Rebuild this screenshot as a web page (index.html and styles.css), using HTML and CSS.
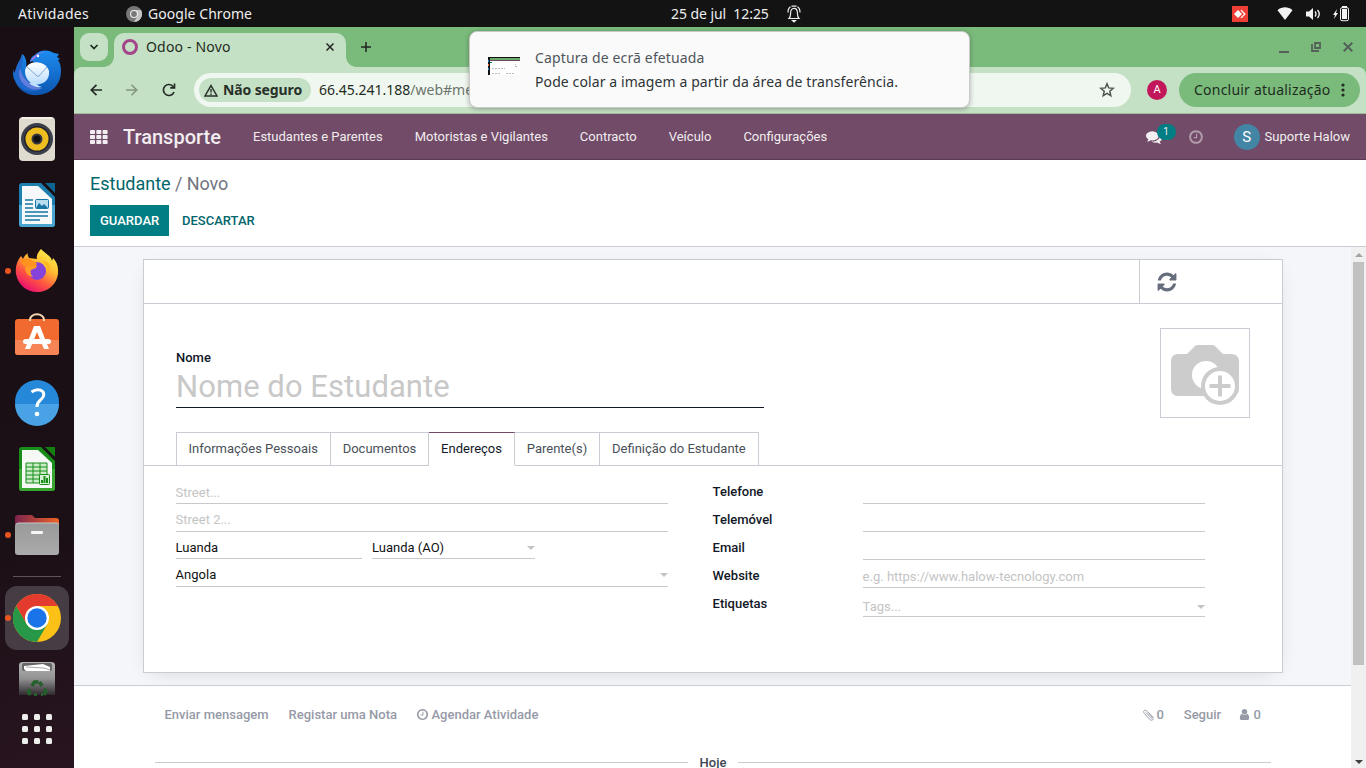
FILE: index.html
```html
<!DOCTYPE html>
<html lang="pt">
<head>
<meta charset="utf-8">
<title>Odoo - Novo</title>
<link rel="stylesheet" href="styles.css">
</head>
<body>
<header class="topbar">
  <span class="activities">Atividades</span>
  <span class="app-name"><svg width="16" height="16" viewBox="0 0 16 16"><circle cx="8" cy="8" r="8" fill="#777"/><path d="M8 4h7A8 8 0 0 1 8 16l3.500-6z" fill="#c4c4c4"/><circle cx="8" cy="8" r="4" fill="#eee"/><circle cx="8" cy="8" r="2.900" fill="#777"/></svg><span class="app-text">Google Chrome</span></span>
  <span class="clock"><span class="clock-text">25 de jul&nbsp; 12:25</span><svg width="14" height="18" viewBox="0 0 14 18" fill="none" stroke="#eee" stroke-width="1.200"><path d="M2 13.500c1.500-1.500 1.600-3 1.600-5.500C3.600 5.300 5 3.400 7 3.400s3.400 1.900 3.400 4.600c0 2.500.1 4 1.600 5.500zM1 7.500c0-3 .8-4.700 2.600-5.700M13 7.500c0-3-.8-4.700-2.600-5.700M4.500 1.200h5"/><path d="M5.500 15.500h3L7 17z" fill="#eee"/></svg></span>
  <span class="tray">
    <svg width="16" height="16" viewBox="0 0 16 16"><path fill="#ef3e36" d="M0 0h16v16H0z"/><path fill="#fff" d="m6 4 4 4-4 4-4-4z"/><path d="m8.500 4.500 1-.8L13.800 8l-4.300 4.300-1-.8L12 8z" fill="#fff"/></svg>
    <svg class="wifi" width="16" height="14" viewBox="0 0 16 14"><path fill="#f2f2f2" d="M.5 3.200C5-.6 11-.6 15.500 3.200L8 13z"/></svg>
    <svg class="volume" width="15" height="14" viewBox="0 0 15 14"><path fill="#f2f2f2" d="M0 4.500h3L7 1v12L3 9.500H0z"/><path d="M9 4.500q2 2.500 0 5M11.500 3q3.500 4 0 8" fill="none" stroke="#f2f2f2" stroke-width="1.300"/></svg>
    <svg class="battery" width="16" height="16" viewBox="0 0 16 16"><path fill="#f2f2f2" d="M4 3 0 9h2L1 13l4-6H3zM9 3h5v10H9zM9 0h5v2H9z"/><rect x="7.500" y="1.700" width="8" height="13" rx="1.500" fill="none" stroke="#f2f2f2"/></svg>
  </span>
</header>
<div class="desktop">
<nav class="dock">
  <div class="slot"><svg width="48" height="48" viewBox="0 0 48 48"><defs><linearGradient id="tb" x2="0" y2="1"><stop stop-color="#1d8cf0"/><stop offset="1" stop-color="#0c55b0"/></linearGradient><linearGradient id="env" x2="0" y2="1"><stop stop-color="#fff"/><stop offset="1" stop-color="#b9dcff"/></linearGradient></defs><path fill="url(#tb)" d="M0 20c0 6 0 8 2 12C6 42 15 47 25 46c14-1 23-11 23-24 0-5-1-8-3-11l2-1-3-2 2-3-5-1C34 0 26 1 22 6c-3 1-5 4-5 7 3-2 4 0 4 2l-9 9C15 15 13 7 9 5 8 11 5 12 3 20c-1 2-1 3-2 4z"/><path d="M17 13c3-6 8-10 15-10-6 1-8 4-11 7z" fill="#ad78e8"/><path d="M3 33C-1 21 7 12 10 6c1 12-6 14 2 28 3 6 11 8 16 6-10 5-20 1-25-7" fill="#2068cc"/><path d="M7 19c-3 8 1 16 9 20 5 2 10 2 13 0-9-1-20-8-22-20z" fill="#607ddd"/><path fill="url(#env)" d="M12 22c1-11 20-12 24 0 1 10-7 15-17 13-4-3-7-7-7-13z"/><path d="m14 18 10 9q1 1 2 0l8-9" fill="none" stroke="#82aacd"/><path d="M22 34q3 3 7 4-8 1-13-4z" fill="#c3e2ff"/><circle cx="25" cy="7" r="1.200" fill="#fff"/></svg></div>
  <div class="slot"><svg width="48" height="48" viewBox="0 0 48 48"><rect x="6" y="2" width="36" height="44" rx="4" fill="#dfdbcf"/><path d="M9 3h30" stroke="#f4f1e8" stroke-width="2"/><circle cx="24" cy="24" r="16" fill="#3b3f4c"/><circle cx="24" cy="24" r="13" fill="#22242c"/><circle cx="24" cy="24" r="11.500" fill="#eebd20"/><circle cx="24" cy="24" r="5.500" fill="#34373e"/><circle cx="24" cy="24" r="3.500" fill="#111"/></svg></div>
  <div class="slot"><svg width="48" height="48" viewBox="0 0 48 48"><path d="M9 2h19l14 14v27a3 3 0 0 1-3 3H9a3 3 0 0 1-3-3V5a3 3 0 0 1 3-3z" fill="#1d7fae"/><path d="M6 24h36v19a3 3 0 0 1-3 3H9a3 3 0 0 1-3-3z" fill="#4aa6cf"/><path d="M9 5h16l14 13v25H9z" fill="#f6f8fa"/><path d="M32 2h10v10z" fill="#0c6590"/><path d="M12 19h8M12 23h8M12 27h8M12 31h23M12 35h23M12 39h15" stroke="#1675a4" stroke-width="1.700"/><rect x="22.500" y="18.500" width="13" height="9" rx="1" fill="#b8ddee" stroke="#1675a4"/><path d="m23 27 3-5 3 3 2-2 4 4z" fill="#1675a4"/></svg></div>
  <div class="slot"><i class="running"></i><svg width="48" height="48" viewBox="0 0 48 48"><defs><linearGradient id="ff" x1=".85" y1=".05" x2=".25" y2="1"><stop stop-color="#fff44f"/><stop offset=".35" stop-color="#ffbd32"/><stop offset=".65" stop-color="#ff5840"/><stop offset="1" stop-color="#e90675"/></linearGradient></defs><path fill="url(#ff)" d="M28 2c-3 3-5 7-4 10l-8-1c-1-2-2-3-1-5-3 2-4 4-5 6L8 9C4 14 2 20 3 27c2 11 11 18 21 18 12 0 22-10 21-22 0-5-2-9-5-12l-1 3C38 8 32 7 28 2z"/><circle cx="24" cy="24" r="9" fill="#8643dc"/><path d="M13 18q4-1 11 0l-1 3-5 2c-1 3 0 5 2 7-7-1-9-7-7-12z" fill="#ff9b28"/><path d="M29 14q7 4 5 13 5-5 2-10-2-3-7-3" fill="#ffb51e"/><path d="M8 13c3-2 8-2 12 1l4 2-2 3-8 1q-6-2-6-7" fill="#ff931e"/></svg></div>
  <div class="slot"><svg width="48" height="48" viewBox="0 0 48 48"><rect x="2" y="6" width="44" height="36" rx="3" fill="#f16b31"/><path d="M2 27h44v12a3 3 0 0 1-3 3H5a3 3 0 0 1-3-3z" fill="#f68455"/><path d="M17 8c-1-9 15-9 14 0" fill="none" stroke="#f3d5ae" stroke-width="2"/><path d="M12 36 21 13h6l9 23h-5l-7-17-7 17z" fill="#fff"/><rect x="10" y="26" width="28" height="5" rx="2.500" fill="#fff"/></svg></div>
  <div class="slot"><svg width="48" height="48" viewBox="0 0 48 48"><circle cx="24" cy="23" r="22" fill="#2588d8"/><path d="M2 25h44a22 22 0 0 1-44 0z" fill="#48a2e5"/><path d="M18.500 13c6-4.500 13.500-2 12 4-1 4-7 5-6.500 11" fill="none" stroke="#fff" stroke-width="3"/><circle cx="24" cy="35" r="2.300" fill="#fff"/></svg></div>
  <div class="slot"><svg width="48" height="48" viewBox="0 0 48 48"><path d="M9 2h19l14 14v27a3 3 0 0 1-3 3H9a3 3 0 0 1-3-3V5a3 3 0 0 1 3-3z" fill="#198d1a"/><path d="M6 24h36v19a3 3 0 0 1-3 3H9a3 3 0 0 1-3-3z" fill="#38a52e"/><path d="M9 5h16l14 13v25H9z" fill="#f6f8f6"/><path d="M32 2h10v10z" fill="#137f13"/><path d="M13 18h21v20H13z" fill="#caedc8"/><path d="M13 18h21v20H13zM13 22h21M13 26h21M13 30h21M13 34h21M20 18v20M27 18v20" stroke="#178d18" fill="none"/><rect x="26.500" y="29.500" width="10" height="10" rx="1" fill="#d9f3d6" stroke="#178d18"/><path d="M28 35h2v3h-2zM30.500 31h2v7h-2zM33 33h2v5h-2z" fill="#178d18"/></svg></div>
  <div class="slot"><i class="running"></i><svg width="48" height="48" viewBox="0 0 48 48"><defs><linearGradient id="fold"><stop stop-color="#7c234e"/><stop offset="1" stop-color="#ee6427"/></linearGradient><linearGradient id="gray" x2="0" y2="1"><stop stop-color="#999"/><stop offset="1" stop-color="#ababab"/></linearGradient></defs><path d="M5 4h14l3 3h21a3 3 0 0 1 3 3v10H2V7a3 3 0 0 1 3-3z" fill="url(#fold)"/><rect x="2" y="12" width="44" height="32" rx="3" fill="url(#gray)"/><path d="M3 13.500q1-1.500 3-1.500h37q2 0 3 1.500" fill="none" stroke="#c6c6c6"/><rect x="18" y="20" width="12" height="3" rx="1" fill="#f5f5f5"/></svg></div>
  <div class="dock-line"></div>
  <div class="slot active"><i class="running"></i><svg width="48" height="48" viewBox="0 0 48 48"><circle cx="24" cy="24" r="24" fill="#fbc116"/><path d="M3.200 12A24 24 0 0 1 44.800 12H24L13.600 30z" fill="#e33b2e"/><path d="M3.200 12A24 24 0 0 0 24 48l10.400-18H13.600z" fill="#279847"/><circle cx="24" cy="24" r="12" fill="#fff"/><circle cx="24" cy="24" r="9.700" fill="#1a73e8"/></svg></div>
  <svg class="trash" width="38" height="35" viewBox="0 0 38 35"><defs><linearGradient id="tr" x2="0" y2="1"><stop stop-color="#b4b4b4"/><stop offset=".5" stop-color="#929292"/><stop offset="1" stop-color="#302a30"/></linearGradient></defs><path d="M1 34V4q0-3 4-3h28q4 0 4 3v30z" fill="url(#tr)"/><rect x="4" y="2" width="30" height="8" rx="2" fill="#666"/><path d="M6 8V5l19-2 7 3v4H8z" fill="#fff"/><path d="m8 6 18 1 6 2" stroke="#aaa" fill="none"/><path d="m14 25 2.500-4h4M21.500 21l2.500 4M26.500 27.500l1.500 3-2 3.500M12 28l-1.500 3 2 3M16 34h3M23 34h2" fill="none" stroke="#245f2c" stroke-width="3.500"/></svg>
  <div class="app-grid"><i></i><i></i><i></i><i></i><i></i><i></i><i></i><i></i><i></i></div>
</nav>
<main class="browser">
  <div class="tabstrip">
    <span class="tab-search"><svg width="10" height="6" viewBox="0 0 10 6"><path d="m1.500 1 3.500 3.500L8.500 1" fill="none" stroke="#1e2b20" stroke-width="1.700"/></svg></span>
    <div class="tab"><i class="odoo"></i><span class="tab-title">Odoo - Novo</span><svg width="8" height="8" viewBox="0 0 8 8"><path d="m.5.5 7 7m0-7-7 7" stroke="#222" stroke-width="1.500"/></svg></div>
    <svg class="new-tab" width="10" height="10" viewBox="0 0 10 10"><path d="M0 5h10M5 0v10" stroke="#222" stroke-width="1.500"/></svg>
    <div class="window-controls">
      <svg width="10" height="12" viewBox="0 0 10 12"><path d="M0 10h10" stroke="#55605a" stroke-width="2"/></svg>
      <svg width="10" height="10" viewBox="0 0 10 10"><path d="M4 1h5v5H4zM1 2v7h7" fill="none" stroke="#55605a" stroke-width="1.800"/></svg>
      <svg width="10" height="10" viewBox="0 0 10 10"><path d="m.7.7 8.600 8.600m0-8.600L.7 9.300" stroke="#55605a" stroke-width="2"/></svg>
    </div>
  </div>
  <div class="toolbar">
    <svg class="back" width="12" height="12" viewBox="0 0 12 12"><path d="M12 6H1.500M6.500.8 1.300 6l5.200 5.200" fill="none" stroke="#222a24" stroke-width="1.700"/></svg>
    <svg class="forward" width="12" height="12" viewBox="0 0 12 12"><path d="M0 6h10.500M5.500.8 10.700 6l-5.200 5.200" fill="none" stroke="#84977f" stroke-width="1.600"/></svg>
    <svg class="reload" width="14" height="14" viewBox="0 0 14 14"><path d="M12 9a5.500 5.500 0 1 1-.7-5.300M12.500.5v4.300H8.200" fill="none" stroke="#222a24" stroke-width="1.700"/></svg>
    <div class="address">
      <span class="security"><svg width="14" height="13" viewBox="0 0 14 13"><path d="M7 1.600 13 12H1z" fill="none" stroke="#28302a" stroke-width="1.500"/><path d="M7 5v3.500M7 9.500V11" stroke="#28302a" stroke-width="1.400"/></svg><b>Não seguro</b></span>
      <span class="url">66.45.241.188<span>/web#me</span></span>
      <svg class="star" width="16" height="16" viewBox="0 0 16 16"><path d="m8 1.800 1.700 4.100 4.500.4-3.400 2.900 1 4.400L8 11.300l-3.800 2.300 1-4.400-3.400-2.900 4.500-.4z" fill="none" stroke="#4d5750" stroke-width="1.500"/></svg>
    </div>
    <span class="profile">A</span>
    <div class="update"><span class="update-text">Concluir atualização</span><svg width="4" height="14" viewBox="0 0 4 14" fill="#222a24"><circle cx="2" cy="2" r="1.600"/><circle cx="2" cy="7" r="1.600"/><circle cx="2" cy="12" r="1.600"/></svg></div>
  </div>
  <nav class="odoo-nav">
    <svg class="apps" width="18" height="14" viewBox="0 0 18 14" fill="#f1edf0"><rect width="5" height="4" rx=".8"/><rect x="6.300" width="5" height="4" rx=".8"/><rect x="12.600" width="5" height="4" rx=".8"/><rect y="5" width="5" height="4" rx=".8"/><rect x="6.300" y="5" width="5" height="4" rx=".8"/><rect x="12.600" y="5" width="5" height="4" rx=".8"/><rect y="10" width="5" height="4" rx=".8"/><rect x="6.300" y="10" width="5" height="4" rx=".8"/><rect x="12.600" y="10" width="5" height="4" rx=".8"/></svg>
    <span class="brand">Transporte</span>
    <div class="menu"><span>Estudantes e Parentes</span><span>Motoristas e Vigilantes</span><span>Contracto</span><span>Veículo</span><span>Configurações</span></div>
    <div class="systray">
      <span class="chat"><svg width="16" height="16" viewBox="0 0 1792 1792"><path fill="#f2eef1" d="M1408 768q0 139-94 257t-256.500 186.500-353.500 68.500q-86 0-176-16-124 88-278 128-36 9-86 16h-3q-11 0-20.500-8t-11.500-21q-1-3-1-6.500t.5-6.500 2-6l2.500-5 3.500-5.500 4-5 4.500-5 4-4.500q5-6 23-25t26-29.500 22.500-29 25-38.500 20.500-44q-124-72-195-177t-71-224q0-139 94-257t256.500-186.500 353.500-68.500 353.500 68.500 256.500 186.500 94 257zm384 256q0 120-71 224.500t-195 176.500q10 24 20.500 44t25 38.500 22.500 29 26 29.500 23 25q1 1 4 4.500t4.500 5 4 5 3.500 5.500l2.500 5 2 6 .5 6.500-1 6.500q-3 14-13 22t-22 7q-50-7-86-16-154-40-278-128-90 16-176 16-271 0-472-132 58 4 88 4 161 0 309-45t264-129q125-92 192-212t67-254q0-77-23-152 129 71 204 178t75 230z"/></svg><b class="badge">1</b></span>
      <svg class="activity" width="16" height="16" viewBox="0 0 1792 1792"><path fill="#b19cab" d="M1024 544v448q0 14-9 23t-23 9h-320q-14 0-23-9t-9-23v-64q0-14 9-23t23-9h224v-352q0-14 9-23t23-9h64q14 0 23 9t9 23zm416 352q0-148-73-273t-198-198-273-73-273 73-198 198-73 273 73 273 198 198 273 73 273-73 198-198 73-273zm224 0q0 209-103 385.500t-279.500 279.500-385.500 103-385.500-103-279.500-279.500-103-385.500 103-385.500 279.500-279.500 385.500-103 385.500 103 279.500 279.500 103 385.500z"/></svg>
      <span class="avatar">S</span><span class="user">Suporte Halow</span>
    </div>
  </nav>
  <section class="control-panel">
    <div class="breadcrumb"><a>Estudante</a> / Novo</div>
    <div class="buttons"><button class="save">GUARDAR</button><button class="discard">DESCARTAR</button></div>
  </section>
  <div class="page">
    <div class="content">
      <div class="form-bg">
        <section class="sheet">
          <div class="button-box"><div class="stat"><svg width="22" height="22" viewBox="0 0 1792 1792"><path fill="#666e7d" d="M1639 1056q0 5-1 7-64 268-268 434.500t-478 166.500q-146 0-282.500-55t-243.500-157l-129 129q-19 19-45 19t-45-19-19-45v-448q0-26 19-45t45-19h448q26 0 45 19t19 45-19 45l-137 137q71 66 161 102t187 36q134 0 250-65t186-179q11-17 53-117 8-23 30-23h192q13 0 22.500 9.500t9.500 22.500zm25-800v448q0 26-19 45t-45 19h-448q-26 0-45-19t-19-45 19-45l138-138q-148-137-349-137-134 0-250 65t-186 179q-11 17-53 117-8 23-30 23h-199q-13 0-22.500-9.500t-9.500-22.500v-7q65-268 270-434.500t480-166.500q146 0 284 55.500t245 156.500l130-129q19-19 45-19t45 19 19 45z"/></svg></div></div>
          <div class="head">
            <div class="name-block"><b>Nome</b><div class="name">Nome do Estudante</div></div>
            <div class="photo"><svg width="70" height="62" viewBox="0 0 70 62"><path fill="#ccc" d="M8 10h9l8-8q1-1 3-1h14q2 0 3 1l8 8h8q8 0 8 8v26q0 8-8 8H8q-7 0-7-8V18q0-8 7-8z"/><circle cx="36" cy="31" r="14" fill="#fff"/><circle cx="50" cy="42" r="19" fill="#ccc"/><circle cx="50" cy="42" r="15" fill="#fff"/><path d="M39.500 42h21M50 31.500v21" stroke="#ccc" stroke-width="4"/></svg></div>
          </div>
          <div class="tabs"><span>Informações Pessoais</span><span>Documentos</span><span class="selected">Endereços</span><span>Parente(s)</span><span>Definição do Estudante</span></div>
          <div class="fields">
            <div class="left">
              <div class="input hint">Street...</div>
              <div class="input hint second">Street 2...</div>
              <div class="pair"><div class="input city">Luanda</div><div class="input state">Luanda (AO)<i class="caret"></i></div></div>
              <div class="input country">Angola<i class="caret"></i></div>
            </div>
            <div class="right">
              <div class="row"><b>Telefone</b><div class="input"></div></div>
              <div class="row"><b>Telemóvel</b><div class="input"></div></div>
              <div class="row"><b>Email</b><div class="input"></div></div>
              <div class="row"><b>Website</b><div class="input hint">e.g. https://www.halow-tecnology.com</div></div>
              <div class="row tags"><b>Etiquetas</b><div class="input hint">Tags...<i class="caret"></i></div></div>
            </div>
          </div>
        </section>
      </div>
      <section class="chatter">
        <div class="chatter-bar">
          <span>Enviar mensagem</span><span class="note">Registar uma Nota</span><span class="schedule"><svg width="13" height="13" viewBox="0 0 1792 1792"><path fill="#969aa7" d="M1024 544v448q0 14-9 23t-23 9h-320q-14 0-23-9t-9-23v-64q0-14 9-23t23-9h224v-352q0-14 9-23t23-9h64q14 0 23 9t9 23zm416 352q0-148-73-273t-198-198-273-73-273 73-198 198-73 273 73 273 198 198 273 73 273-73 198-198 73-273zm224 0q0 209-103 385.500t-279.500 279.500-385.500 103-385.500-103-279.500-279.500-103-385.500 103-385.500 279.500-279.500 385.500-103 385.500 103 279.500 279.500 103 385.500z"/></svg>Agendar Atividade</span>
          <span class="attach"><svg width="11" height="12" viewBox="0 0 11 12"><path d="m3 3.500 4.700 5c1 1.100 2.300 0 1.300-1.100L4.200 2.300C2-.1-.7 2 1.400 4.500l5 5.600c2.500 2.600 5.200.1 2.900-2.400L5.600 3.800" fill="none" stroke="#969aa7" stroke-width="1"/></svg>0</span>
          <span class="follow">Seguir</span>
          <span class="followers"><svg width="13" height="13" viewBox="0 0 1792 1792"><path fill="#969aa7" d="M1536 1399q0 109-62.500 187t-150.500 78h-854q-88 0-150.500-78t-62.500-187q0-85 8.500-160.500t31.500-152 58.500-131 94-89 134.500-34.500q131 128 313 128t313-128q76 0 134.500 34.500t94 89 58.500 131 31.500 152 8.500 160.500zm-256-887q0 159-112.500 271.500t-271.500 112.500-271.500-112.500-112.500-271.500 112.500-271.500 271.500-112.500 271.500 112.500 112.500 271.500z"/></svg>0</span>
        </div>
        <div class="day"><i></i><b>Hoje</b><i></i></div>
      </section>
    </div>
    <div class="scrollbar"><i class="up"></i><i class="thumb"></i><i class="down"></i></div>
  </div>
</main>
</div>
<aside class="notification">
  <svg width="32" height="18" viewBox="0 0 32 18"><path d="M0 0h32v18H0z" fill="#fff"/><path d="M0 0h32v1H0zM0 1h2v17H0z" fill="#111"/><path d="M2 1h30v2H2z" fill="#68a96c"/><path d="M2 3h30v1H2z" fill="#6f4b65"/><path d="M0 3h1v2H0zm0 8h1v2H0z" fill="#2588d8"/><path d="M0 7h1v2H0z" fill="#f16b31"/><path d="M2 5h2v1H2z" fill="#017e84"/><path d="M4 11.500h13M4 16.500h9m5 0h8" stroke="#bbb" stroke-dasharray="2 1" fill="none"/><path d="M27 7h1v1h-1zm0 2h2v1h-2z" fill="#bbb"/></svg>
  <div><div class="notice-title">Captura de ecrã efetuada</div><div class="notice-body">Pode colar a imagem a partir da área de transferência.</div></div>
</aside>
</body>
</html>
```

FILE: styles.css
```css
* { box-sizing: border-box; }
body { margin: 0; width: 1366px; height: 768px; overflow: hidden; display: flex; flex-direction: column; font: 13px Roboto, sans-serif; color: #111827; }
svg { display: block; flex: none; }
.topbar, .tabstrip, .toolbar, .notification { font-family: "Noto Sans", sans-serif; font-size: 14px; white-space: nowrap; }

.topbar { height: 27px; flex: none; display: grid; grid-template-columns: 126px 545px 1fr auto; align-items: center; background: #131313; color: #eee; }
.activities { padding-left: 18px; letter-spacing: .3px; }
.app-name { display: flex; align-items: center; gap: 6px; }
.app-text { letter-spacing: .05px; }
.clock { display: flex; align-items: center; gap: 18px; }
.clock-text { letter-spacing: -.06px; }
.tray { display: flex; align-items: center; padding-right: 17px; }
.wifi { margin-left: 29px; }
.volume { margin-left: 13px; }
.battery { margin-left: 12px; }

.desktop { display: flex; flex: 1; min-height: 0; }
.dock { width: 74px; flex: none; background: linear-gradient(165deg, #1a0e15, #1c1017 70%, #28141f); padding-top: 13px; display: flex; flex-direction: column; align-items: center; }
.slot { height: 66px; width: 74px; flex: none; display: flex; align-items: center; justify-content: center; position: relative; }
.running { position: absolute; left: 5px; top: 30px; width: 6px; height: 6px; border-radius: 50%; background: #e95420; }
.dock-line { width: 48px; height: 1px; flex: none; background: #5d555a; margin: 8px 0 9px; }
.slot.active { width: 64px; height: 64px; border-radius: 12px; background: #463c43; }
.slot.active .running { left: 0; top: 29px; }
.trash { margin-top: 11px; }
.app-grid { display: grid; grid-template-columns: repeat(3, 6px); gap: 6px; margin-top: 18px; }
.app-grid i { width: 6px; height: 6px; border-radius: 1.500px; background: #eeeeec; }

.browser { flex: 1; min-width: 0; display: flex; flex-direction: column; background: #7abb7c; }
.tabstrip { height: 40px; flex: none; background: #7abb7c; display: flex; color: #1f2b21; }
.tab-search { width: 28px; height: 28px; margin: 6px 0 0 6px; border-radius: 9px; background: #c5e1c5; display: flex; align-items: center; justify-content: center; }
.tab { position: relative; width: 232px; height: 34px; margin: 6px 0 0 6px; padding: 0 12px 6px 8px; border-radius: 10px 10px 0 0; background: #c5e1c5; display: flex; align-items: center; }
.tab::before, .tab::after { content: ""; position: absolute; bottom: 0; width: 10px; height: 10px; }
.tab::before { left: -10px; background: radial-gradient(circle at 0 0, transparent 9.500px, #c5e1c5 10px); }
.tab::after { right: -10px; background: radial-gradient(circle at 100% 0, transparent 9.500px, #c5e1c5 10px); }
.odoo { width: 16px; height: 16px; border: 3.500px solid #a24689; border-radius: 50%; }
.tab-title { flex: 1; padding: 0 0 2px 8px; letter-spacing: .18px; }
.new-tab { margin: 15px 0 0 15px; }
.window-controls { margin: 15px 13px 0 auto; display: flex; gap: 22px; }
.toolbar { height: 47px; flex: none; background: #c5e1c5; border-bottom: 1px solid #a0bba0; border-radius: 8px 8px 0 0; display: flex; align-items: center; padding: 0 6px 0 16px; }
.forward { margin-left: 24px; }
.reload { margin-left: 24px; }
.address { width: 937px; height: 34px; margin-left: 18px; border-radius: 17px; background: #f0f7f0; display: flex; align-items: center; padding: 0 16px 0 5px; }
.security { width: 112px; height: 24px; border-radius: 12px; background: #c5e1c5; display: flex; align-items: center; padding-left: 5px; gap: 5px; color: #28302a; }
.security b { font-weight: 700; letter-spacing: -.12px; padding-bottom: 1px; }
.url { margin-left: 8px; padding-bottom: 2px; flex: 1; color: #1f2b21; }
.url span { color: #6b746d; }
.profile { width: 20px; height: 20px; margin-left: 16px; border-radius: 50%; background: #c2185b; color: #fff; font: 11px/20px Roboto, sans-serif; text-align: center; }
.update { width: 181px; height: 34px; margin-left: 12px; border-radius: 17px; background: #7abb7c; color: #1e2b20; display: flex; align-items: center; justify-content: space-between; padding: 0 15px; }
.update-text { letter-spacing: .22px; padding-bottom: 2px; }

.odoo-nav { height: 46px; flex: none; background: #714b67; border-bottom: 1px solid #593b51; color: #f1edf0; display: flex; align-items: center; padding: 0 16px; }
.brand { margin-left: 15px; font-size: 20px; font-weight: 500; width: 130px; }
.menu { display: flex; gap: 32px; white-space: nowrap; }
.systray { margin-left: auto; display: flex; align-items: center; }
.chat { position: relative; }
.badge { position: absolute; left: 11px; top: -5px; width: 19px; height: 16px; border-radius: 8px; background: #017e84; font: 10px/16px Roboto, sans-serif; text-align: center; }
.activity { margin-left: 26px; }
.avatar { width: 26px; height: 26px; margin: 1px 5px 0 30px; border-radius: 50%; background: #4285a5; color: #fff; font-size: 15px; line-height: 26px; text-align: center; }

.control-panel { height: 87px; flex: none; background: #fff; border-bottom: 1px solid #c9ccd2; padding: 12px 16px 0; }
.breadcrumb { font-size: 18px; line-height: 24px; color: #71757f; letter-spacing: -.1px; }
.breadcrumb a { color: #01666b; letter-spacing: 0; }
.buttons { display: flex; margin-top: 9px; }
.buttons button { border: 0; padding: 0 10px; height: 31px; font: 500 13px Roboto, sans-serif; }
.buttons .save { width: 79px; background: #017e84; color: #fff; }
.buttons .discard { margin-left: 3px; background: none; color: #01666b; }

.page { display: flex; flex: 1; min-height: 0; background: #fff; }
.content { flex: 1; min-width: 0; overflow: hidden; }
.form-bg { height: 439px; background: #f5f6fa; border-bottom: 1px solid #c9ccd2; padding: 12px 68px 0 69px; overflow: hidden; }
.sheet { height: 414px; background: #fff; border: 1px solid #c9ccd2; box-shadow: 0 5px 20px -8px rgba(0, 0, 0, .16); }
.button-box { height: 44px; border-bottom: 1px solid #c9ccd2; display: flex; justify-content: flex-end; }
.stat { width: 143px; border-left: 1px solid #c9ccd2; padding: 11px 0 0 15.500px; }
.head { display: flex; justify-content: space-between; height: 128px; padding: 24px 32px 0; }
.name-block { width: 588px; padding-top: 20px; }
b { font-weight: 500; }
.name-block b { display: block; line-height: 20px; }
.name { height: 40px; line-height: 37px; font-size: 31px; letter-spacing: .05px; color: #c8c8c8; border-bottom: 1px solid #111827; }
.photo { width: 90px; height: 90px; border: 1px solid #c9ccd2; display: flex; align-items: center; justify-content: center; padding-top: 4px; }
.tabs { height: 34px; border-bottom: 1px solid #c9ccd2; display: flex; padding-left: 32px; color: #495057; }
.tabs span { height: 34px; padding: 0 12px 0 11.800px; border: 1px solid #c9ccd2; border-left-width: 0; line-height: 32px; white-space: nowrap; }
.tabs span:first-child { border-left-width: 1px; padding-left: 11.500px; }
.tabs .selected { color: #111827; border-top-color: #714b67; border-bottom-color: #fff; }
.fields { display: flex; padding: 11px 77px 0 32px; }
.left { width: 492px; }
.input { position: relative; height: 28px; border-bottom: 1px solid #c8c9cc; line-height: 31px; color: #111; white-space: nowrap; text-indent: -.4px; }
.hint { color: #c4c4c4; }
.pair { display: flex; gap: 10px; }
.city, .state { height: 27px; }
.city { width: 186px; }
.state { width: 163px; text-indent: 0; }
.country { line-height: 31px; }
.left > .input:first-child { line-height: 32px; }
.left > .input:first-child, .row:first-child { height: 27px; }
.pair .input { line-height: 32px; }
.caret { position: absolute; right: 0; top: 14px; border: 4px solid transparent; border-top-color: #c4c4c4; border-bottom: 0; }
.right { width: 492px; margin-left: 45px; }
.row { display: flex; height: 28px; }
.row b { width: 150px; line-height: 31px; text-indent: -.4px; }
.row .input { flex: 1; height: 100%; line-height: 33px; }
.row:first-child b { line-height: 29px; }
.row.tags { height: 29px; }
.tags .input { line-height: 37px; }
.tags .caret { top: 17px; }

.chatter-bar { display: flex; align-items: center; height: 57px; padding: 0 90px 0 90.500px; color: #969aa7; font-weight: 500; white-space: nowrap; }
.note { margin-left: 20px; }
.schedule { margin-left: 19px; }
.schedule, .attach, .followers { display: flex; align-items: center; gap: 2.500px; }
.attach { margin-left: auto; }
.follow { margin-left: 20px; }
.followers { margin-left: 17px; }
.day { display: flex; align-items: center; height: 20px; line-height: 15px; margin: 9px 80px 0 81px; color: #3f4653; gap: 12px; }
.day i { flex: 1; height: 1px; background: #c9ccd2; }
.scrollbar { width: 15px; background: #f0f0f0; display: flex; flex-direction: column; align-items: center; padding: 6px 0 4px; }
.up, .down { border: 4px solid transparent; }
.up { border-bottom-color: #a3a3a3; border-top: 0; }
.thumb { width: 11px; height: 403px; margin-top: 5px; background: #c1c1c1; }
.down { margin-top: auto; border-top-color: #404040; border-bottom: 0; }

.notification { position: absolute; left: 469px; top: 31px; width: 501px; height: 77px; border: 1px solid #c9c9c9; border-radius: 8px; background: #fafafa; box-shadow: 0 1px 5px rgba(0, 0, 0, .3); display: flex; gap: 15px; padding: 14px 18px; color: #2e3436; }
.notification svg { margin-top: 11px; }
.notification div div { line-height: 24px; }
.notification .notice-title { color: #50555a; letter-spacing: .13px; }
.notice-body { letter-spacing: .1px; }
```
